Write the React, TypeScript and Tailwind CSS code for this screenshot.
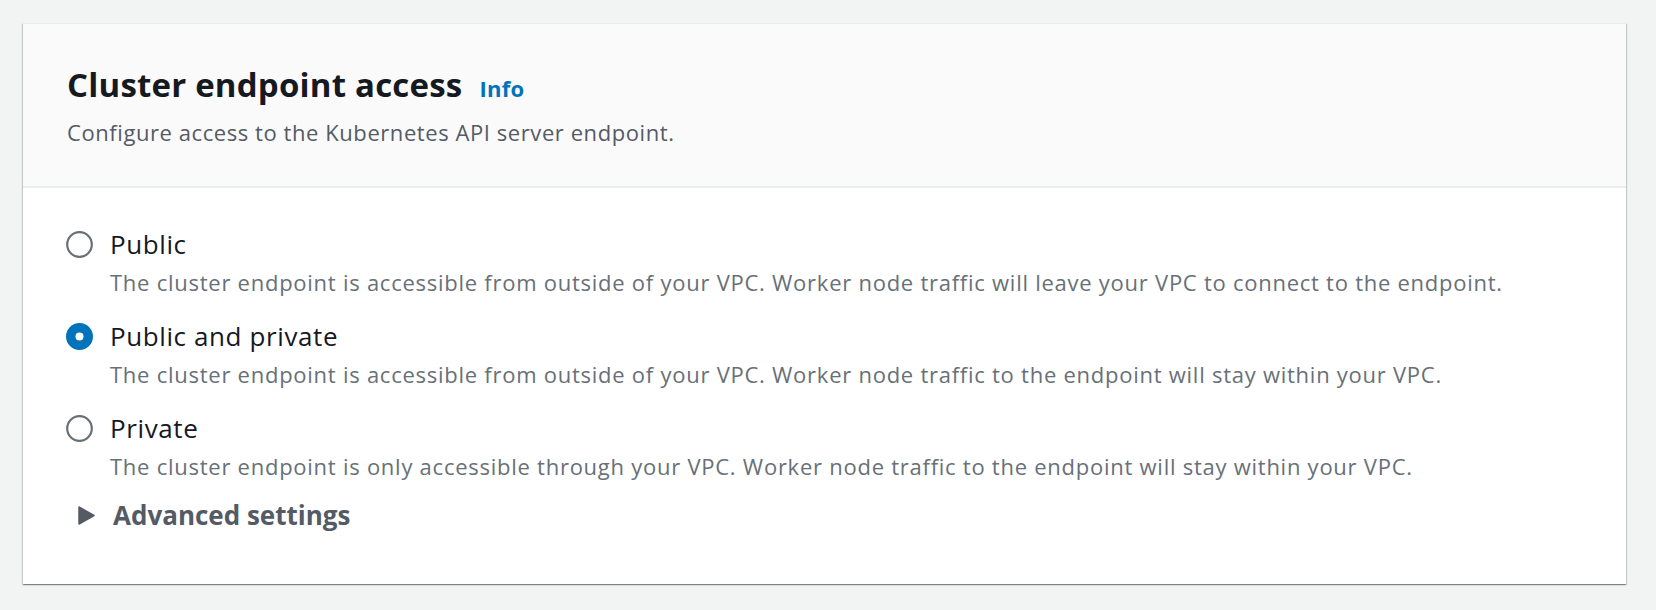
import React from "react";

const options = [
  {
    label: "Public",
    desc: "The cluster endpoint is accessible from outside of your VPC. Worker node traffic will leave your VPC to connect to the endpoint.",
    checked: false,
  },
  {
    label: "Public and private",
    desc: "The cluster endpoint is accessible from outside of your VPC. Worker node traffic to the endpoint will stay within your VPC.",
    checked: true,
  },
  {
    label: "Private",
    desc: "The cluster endpoint is only accessible through your VPC. Worker node traffic to the endpoint will stay within your VPC.",
    checked: false,
  },
];

function Radio({ checked }: { checked: boolean }) {
  return (
    <svg width="27" height="27" viewBox="0 0 27 27" className="shrink-0">
      {checked ? (
        <>
          <circle cx="13.5" cy="13.5" r="13.5" fill="#0073bb" />
          <circle cx="13.5" cy="13.5" r="4" fill="#ffffff" />
        </>
      ) : (
        <circle cx="13.5" cy="13.5" r="12.3" fill="#ffffff" stroke="#687078" strokeWidth="2.2" />
      )}
    </svg>
  );
}

export default function App() {
  return (
    <div
      className="w-[1656px] h-[610px] bg-[#f2f3f3] pl-[23px] pr-[30px] pt-[23px]"
      style={{ fontFamily: "'Open Sans', sans-serif" }}
    >
      <div className="bg-white border-t border-[#eaeded] shadow-[0_1px_1px_0_rgba(0,28,36,0.3),1px_1px_1px_0_rgba(0,28,36,0.15),-1px_1px_1px_0_rgba(0,28,36,0.15)]">
        <div className="bg-[#fafafa] border-b-2 border-[#eaeded] pl-[44px] pt-[41px] pb-[39px]">
          <div className="flex items-baseline h-[40px] leading-[40px]">
            <span className="text-[33px] font-bold text-[#16191f] tracking-[0.2px]">Cluster endpoint access</span>
            <span className="ml-[17px] text-[22px] font-bold text-[#0073bb] tracking-[0.3px]">Info</span>
          </div>
          <div className="mt-[12px] text-[22px] leading-[30px] text-[#545b64] tracking-[0.57px]">
            Configure access to the Kubernetes API server endpoint.
          </div>
        </div>
        <div className="pl-[43px] pt-[40px] pb-[53px]">
          <div className="flex flex-col gap-[23px]">
            {options.map((o) => (
              <div key={o.label} className="flex items-start gap-[17px]">
                <div className="h-[32px] flex items-center">
                  <Radio checked={o.checked} />
                </div>
                <div className="flex flex-col">
                  <div className="text-[26px] leading-[32px] text-[#16191f] tracking-[0.6px]">{o.label}</div>
                  <div className="mt-[7px] text-[22px] leading-[30px] text-[#687078] tracking-[0.745px]">{o.desc}</div>
                </div>
              </div>
            ))}
          </div>
          <div className="mt-[18px] flex items-center h-[32px] pl-[12px] gap-[18px]">
            <svg width="17" height="19" viewBox="0 0 17 19">
              <path d="M1 1 L16 9.5 L1 18 Z" fill="#545b64" stroke="#545b64" strokeWidth="1.5" strokeLinejoin="round" />
            </svg>
            <span className="text-[26px] font-bold text-[#545b64] leading-[32px]">Advanced settings</span>
          </div>
        </div>
      </div>
    </div>
  );
}
